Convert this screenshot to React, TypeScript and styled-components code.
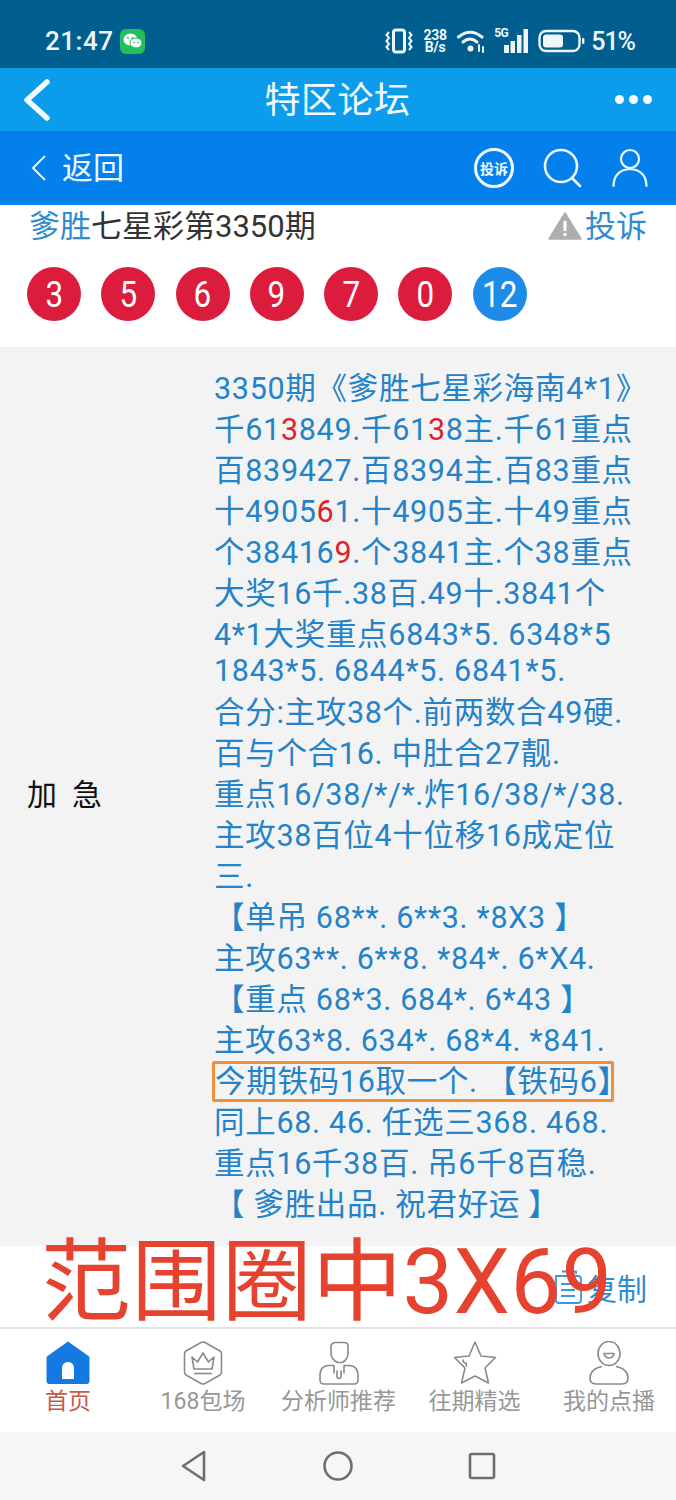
import styled, { createGlobalStyle } from 'styled-components'
import { ReactNode } from 'react'

const GlobalStyle = createGlobalStyle`
  html, body {
    margin: 0;
    padding: 0;
    background: #fff;
    font-family: Roboto, 'Noto Sans CJK SC', sans-serif;
  }
`

const balls = [
  { n: '3', special: false },
  { n: '5', special: false },
  { n: '6', special: false },
  { n: '9', special: false },
  { n: '7', special: false },
  { n: '0', special: false },
  { n: '12', special: true }
]

const R = ({ children }: { children: ReactNode }) => <RedDigit>{children}</RedDigit>

const lines: { text: ReactNode; short?: boolean }[] = [
  { text: '3350期《爹胜七星彩海南4*1》' },
  { text: <>千61<R>3</R>849.千61<R>3</R>8主.千61重点</> },
  { text: '百839427.百8394主.百83重点' },
  { text: <>十4905<R>6</R>1.十4905主.十49重点</> },
  { text: <>个38416<R>9</R>.个3841主.个38重点</> },
  { text: '大奖16千.38百.49十.3841个' },
  { text: '4*1大奖重点6843*5. 6348*5' },
  { text: '1843*5. 6844*5. 6841*5.', short: true },
  { text: '合分:主攻38个.前两数合49硬.' },
  { text: '百与个合16. 中肚合27靓.' },
  { text: '重点16/38/*/*.炸16/38/*/38.' },
  { text: '主攻38百位4十位移16成定位' },
  { text: '三.' },
  { text: '【单吊 68**. 6**3. *8X3 】' },
  { text: '主攻63**. 6**8. *84*. 6*X4.' },
  { text: '【重点 68*3. 684*. 6*43 】' },
  { text: '主攻63*8. 634*. 68*4. *841.' }
]

const linesAfter = [
  '同上68. 46. 任选三368. 468.',
  '重点16千38百. 吊6千8百稳.',
  '【 爹胜出品. 祝君好运 】'
]

const tabs = [
  { label: '首页', active: true, icon: <HomeIcon /> },
  { label: '168包场', active: false, icon: <CrownIcon /> },
  { label: '分析师推荐', active: false, icon: <AnalystIcon /> },
  { label: '往期精选', active: false, icon: <StarIcon /> },
  { label: '我的点播', active: false, icon: <SmileIcon /> }
]

function HomeIcon() {
  return (
    <svg width="44" height="44" viewBox="0 0 44 44">
      <path
        fill="#1479e0"
        fillRule="evenodd"
        d="M22 0.5 L42.5 15 Q43.5 16 43.5 17 V40 Q43.5 43 40.5 43 H3.5 Q0.5 43 0.5 40 V17 Q0.5 16 1.5 15 Z M16 38 H28 V28 Q28 21 22 21 Q16 21 16 28 Z"
      />
    </svg>
  )
}

function CrownIcon() {
  return (
    <svg width="44" height="44" viewBox="0 0 44 44" fill="none" stroke="#8a8a8a" strokeWidth="1.6" strokeLinejoin="round">
      <path d="M20 1.5 Q22 0.5 24 1.5 L39 10 Q40.5 11 40.5 13 V31 Q40.5 33 39 34 L24 42.5 Q22 43.5 20 42.5 L5 34 Q3.5 33 3.5 31 V13 Q3.5 11 5 10 Z" />
      <path d="M11 16 L16.5 21 L22 12 L27.5 21 L33 16 L31 28 H13 Z" />
      <path d="M13 32.5 H31" />
    </svg>
  )
}

function AnalystIcon() {
  return (
    <svg width="44" height="44" viewBox="0 0 44 44" fill="none" stroke="#8a8a8a" strokeWidth="1.6" strokeLinejoin="round" strokeLinecap="round">
      <path d="M18 1.5 H27 Q31 1.5 31 5 V12 Q31 19 25 21.5 H21 Q14 19 14 12 V6 Q14 2 18 1.5 Z" />
      <path d="M17 24.5 H11 Q3 25.5 3 34 V39 Q3 43 7 43 H37 Q41 43 41 39 V34 Q41 25.5 33 24.5 H27 V32 M17 24.5 V32" />
      <path d="M20 30 V35 Q20 37.5 22 37.5 Q24 37.5 24 35 V30" />
    </svg>
  )
}

function StarIcon() {
  return (
    <svg width="44" height="44" viewBox="0 0 44 44" fill="none" stroke="#8a8a8a" strokeWidth="1.6" strokeLinejoin="round" strokeLinecap="round">
      <path d="M22 1 L28 15 L42.5 16.5 L32 27 L35.5 42 L22 35 L8.5 42 L12 27 L1.5 16.5 L16 15 Z" />
      <path d="M10 19 Q10 22 13 22 L13.5 25" />
    </svg>
  )
}

function SmileIcon() {
  return (
    <svg width="44" height="44" viewBox="0 0 44 44" fill="none" stroke="#8a8a8a" strokeWidth="1.6" strokeLinejoin="round">
      <ellipse cx="22" cy="12.5" rx="11" ry="12" />
      <path d="M17 12.5 H27 Q26 17 22 17 Q18 17 17 12.5 Z" />
      <path d="M15 25.5 Q3 28 3 37 Q3 43 9 43 H35 Q41 43 41 37 Q41 28 29 25.5" />
    </svg>
  )
}

const App = () => (
  <Page>
    <GlobalStyle />
    <StatusBar>
      <StatusLeft>
        <Clock>21:47</Clock>
        <WeChatBadge>
          <svg width="19" height="16" viewBox="0 0 19 16">
            <ellipse cx="7.5" cy="6.5" rx="7" ry="6" fill="#fff" />
            <ellipse cx="13" cy="10" rx="6" ry="5" fill="#fff" stroke="#22c05c" strokeWidth="1" />
            <circle cx="5" cy="5" r="1" fill="#22c05c" />
            <circle cx="9.5" cy="5" r="1" fill="#22c05c" />
            <circle cx="11" cy="9.5" r="0.8" fill="#22c05c" />
            <circle cx="15" cy="9.5" r="0.8" fill="#22c05c" />
          </svg>
        </WeChatBadge>
      </StatusLeft>
      <StatusRight>
        <svg width="28" height="26" viewBox="0 0 28 26" fill="none" stroke="#eef6fb" strokeWidth="2">
          <rect x="8.5" y="2" width="11" height="22" rx="2.5" strokeWidth="3" />
          <path d="M4 4 L1.5 7 L4 10 L1.5 13 L4 16 L1.5 19 L4 22" strokeWidth="2" />
          <path d="M24 4 L26.5 7 L24 10 L26.5 13 L24 16 L26.5 19 L24 22" strokeWidth="2" />
        </svg>
        <Speed>
          <span>238</span>
          <span>B/s</span>
        </Speed>
        <svg width="28" height="24" viewBox="0 0 28 24" fill="none" stroke="#eef6fb" strokeWidth="3" strokeLinecap="round">
          <path d="M1.5 8 Q13 -1.5 25 8" />
          <path d="M6 13 Q13 7 20 13" />
          <circle cx="13.5" cy="19.5" r="3" fill="#eef6fb" stroke="none" />
          <path d="M22 16 V22 M26 18 V23" strokeWidth="2" />
        </svg>
        <SignalWrap>
          <FiveG>5G</FiveG>
          <svg width="35" height="26" viewBox="0 0 35 26" fill="#eef6fb">
            <rect x="10" y="17" width="5" height="8" />
            <rect x="16.5" y="13" width="4.5" height="12" />
            <rect x="23" y="7" width="4.5" height="18" />
            <rect x="29.5" y="1" width="4.5" height="24" />
          </svg>
        </SignalWrap>
        <svg width="47" height="24" viewBox="0 0 47 24" fill="none">
          <rect x="1.5" y="2" width="40" height="20" rx="6.5" stroke="#eef6fb" strokeWidth="2.4" />
          <rect x="5" y="5.5" width="20" height="13" rx="3" fill="#eef6fb" />
          <rect x="44" y="9" width="2.4" height="6" rx="1" fill="#eef6fb" />
        </svg>
        <Battery>51%</Battery>
      </StatusRight>
    </StatusBar>

    <TitleBar>
      <svg width="30" height="44" viewBox="0 0 30 44" fill="none" stroke="#f4fbff" strokeWidth="5.5" strokeLinecap="round" strokeLinejoin="round">
        <path d="M25 4 L5 22 L25 40" />
      </svg>
      <TitleText>特区论坛</TitleText>
      <Dots>
        <i />
        <i />
        <i />
      </Dots>
    </TitleBar>

    <NavBar>
      <BackLink>
        <svg width="18" height="30" viewBox="0 0 18 30" fill="none" stroke="#e8f4ff" strokeWidth="2">
          <path d="M15 3 L3 15 L15 27" />
        </svg>
        <BackText>返回</BackText>
      </BackLink>
      <NavIcons>
        <ComplainBadge>投诉</ComplainBadge>
        <svg width="40" height="40" viewBox="0 0 40 40" fill="none" stroke="#f0f8ff" strokeWidth="2.6" strokeLinecap="round">
          <circle cx="18" cy="18" r="16" />
          <path d="M29 30 L37 38" />
        </svg>
        <svg width="36" height="40" viewBox="0 0 36 40" fill="none" stroke="#f0f8ff" strokeWidth="2.2" strokeLinecap="round">
          <circle cx="18" cy="11" r="9" />
          <path d="M1.5 38 Q2 22 18 21 Q34 22 34.5 38" />
        </svg>
      </NavIcons>
    </NavBar>

    <HeadRow>
      <Heading>
        <Author>爹胜</Author>七星彩第3350期
      </Heading>
      <ReportLink>
        <svg width="34" height="28" viewBox="0 0 34 28">
          <path d="M17 1 L33 27 H1 Z" fill="#aeaeae" stroke="#aeaeae" strokeWidth="1.5" strokeLinejoin="round" />
          <rect x="15.5" y="9" width="3" height="10" fill="#fff" />
          <rect x="15.5" y="21" width="3" height="3" fill="#fff" />
        </svg>
        <span>投诉</span>
      </ReportLink>
    </HeadRow>

    <BallRow>
      {balls.map((b, i) => (
        <Ball key={i} $special={b.special}>
          <BallDigit>{b.n}</BallDigit>
        </Ball>
      ))}
    </BallRow>

    <ContentRow>
      <RowLabel>加  急</RowLabel>
      <Body>
        {lines.map((l, i) => (
          <Line key={i} $short={l.short}>
            {l.text}
          </Line>
        ))}
        <Highlight>今期铁码16取一个. 【铁码6】</Highlight>
        {linesAfter.map((l, i) => (
          <Line key={i}>{l}</Line>
        ))}
      </Body>
    </ContentRow>

    <CopyRow>
      <CopyLink>
        <svg width="30" height="34" viewBox="0 0 30 34" fill="none" stroke="#3d97dd" strokeWidth="1.8">
          <path d="M8 1.5 H22 V4 M2 6 H24 Q27 6 27 9 V30 Q27 33 24 33 H5 Q2 33 2 30 Z" />
          <path d="M7 14 H21 M7 20 H21 M7 26 H21" />
        </svg>
        <span>复制</span>
      </CopyLink>
      <Overlay>范围圈中3X69</Overlay>
    </CopyRow>

    <TabBar>
      {tabs.map(t => (
        <Tab key={t.label}>
          {t.icon}
          <TabLabel $active={t.active}>{t.label}</TabLabel>
        </Tab>
      ))}
    </TabBar>

    <SystemBar>
      <svg width="28" height="32" viewBox="0 0 28 32" fill="none" stroke="#6f6f6f" strokeWidth="2.6" strokeLinejoin="round">
        <path d="M24 2 V30 L3 16 Z" />
      </svg>
      <svg width="30" height="30" viewBox="0 0 30 30" fill="none" stroke="#6f6f6f" strokeWidth="2.6">
        <circle cx="15" cy="15" r="13.5" />
      </svg>
      <svg width="28" height="28" viewBox="0 0 28 28" fill="none" stroke="#6f6f6f" strokeWidth="2.6" strokeLinejoin="round">
        <rect x="2" y="2" width="24" height="24" rx="1.5" />
      </svg>
    </SystemBar>
  </Page>
)

export default App

const Page = styled.div`
  width: 676px;
  height: 1500px;
  overflow: hidden;
  display: flex;
  flex-direction: column;
  background: #fff;
`

const StatusBar = styled.div`
  height: 68px;
  box-sizing: border-box;
  padding: 14px 41px 0 45px;
  display: flex;
  align-items: center;
  justify-content: space-between;
  background: #005f8f;
  color: #eef6fb;
`

const StatusLeft = styled.div`
  display: flex;
  align-items: center;
  gap: 7px;
`

const Clock = styled.span`
  font-size: 26px;
  font-weight: 500;
  letter-spacing: 0.5px;
`

const WeChatBadge = styled.span`
  width: 25px;
  height: 25px;
  border-radius: 6px;
  background: #22c05c;
  display: flex;
  align-items: center;
  justify-content: center;
`

const StatusRight = styled.div`
  display: flex;
  align-items: center;
  gap: 9px;
`

const Speed = styled.div`
  width: 26px;
  display: flex;
  flex-direction: column;
  align-items: center;
  font-size: 14px;
  font-weight: 700;
  line-height: 12.5px;
  letter-spacing: -0.2px;
`

const SignalWrap = styled.div`
  position: relative;
  width: 35px;
  height: 26px;
`

const FiveG = styled.span`
  position: absolute;
  left: 0;
  top: -1px;
  font-size: 12px;
  font-weight: 700;
  line-height: 12px;
  letter-spacing: -0.5px;
`

const Battery = styled.span`
  font-size: 25px;
  font-weight: 500;
  letter-spacing: -1px;
  margin-left: -3px;
`

const TitleBar = styled.div`
  height: 63px;
  box-sizing: border-box;
  padding: 0 24px 0 22px;
  display: flex;
  align-items: center;
  justify-content: space-between;
  background: #0c9cec;
`

const TitleText = styled.div`
  font-size: 36px;
  color: #f4fbff;
  letter-spacing: 0.5px;
  margin: 0 0 5px 8px;
`

const Dots = styled.div`
  display: flex;
  gap: 5px;
  i {
    width: 9px;
    height: 9px;
    border-radius: 50%;
    background: #f4fbff;
  }
`

const NavBar = styled.div`
  height: 74px;
  box-sizing: border-box;
  padding: 0 28px 0 30px;
  display: flex;
  align-items: center;
  justify-content: space-between;
  background: #0480ec;
`

const BackLink = styled.div`
  display: flex;
  align-items: center;
  gap: 14px;
  font-size: 31px;
  color: #f0f8ff;
`

const BackText = styled.span`
  margin-bottom: 5px;
`

const NavIcons = styled.div`
  display: flex;
  align-items: center;
  gap: 29px;
`

const ComplainBadge = styled.div`
  width: 40px;
  height: 40px;
  border: 3px solid #f0f8ff;
  border-radius: 50%;
  box-sizing: border-box;
  display: flex;
  align-items: center;
  justify-content: center;
  font-size: 14px;
  font-weight: 700;
  white-space: nowrap;
  color: #f0f8ff;
`

const HeadRow = styled.div`
  height: 42px;
  box-sizing: border-box;
  padding: 0 29px 5px;
  display: flex;
  align-items: center;
  justify-content: space-between;
`

const Heading = styled.div`
  font-size: 31px;
  color: #333;
`

const Author = styled.span`
  color: #2f8bd0;
`

const ReportLink = styled.div`
  display: flex;
  align-items: center;
  gap: 3px;
  font-size: 31px;
  color: #2f8bd0;
  svg {
    margin-top: 5px;
  }
`

const BallRow = styled.div`
  height: 100px;
  box-sizing: border-box;
  padding: 20px 0 0 27px;
  display: flex;
  align-items: flex-start;
  gap: 20.3px;
`

const Ball = styled.div<{ $special: boolean }>`
  width: 54px;
  height: 54px;
  border-radius: 50%;
  display: flex;
  align-items: center;
  justify-content: center;
  font-size: 37px;
  font-weight: 400;
  color: #fff;
  background: ${({ $special }) => ($special ? '#1c8ce8' : '#db1c3c')};
`

const BallDigit = styled.span`
  display: inline-block;
  transform: scaleX(0.85);
`

const ContentRow = styled.div`
  height: 899px;
  box-sizing: border-box;
  display: flex;
  align-items: center;
  background: #f3f3f3;
`

const RowLabel = styled.div`
  width: 214px;
  box-sizing: border-box;
  padding-left: 27px;
  margin-bottom: 9px;
  font-size: 30px;
  color: #111;
  white-space: pre;
`

const Body = styled.div`
  display: flex;
  flex-direction: column;
  font-size: 30.5px;
  letter-spacing: 0.7px;
  line-height: 41px;
  color: #2482c8;
  white-space: nowrap;
`

const Line = styled.div<{ $short?: boolean }>`
  height: ${({ $short }) => ($short ? '37px' : '41px')};
  line-height: ${({ $short }) => ($short ? '31px' : '41px')};
`

const RedDigit = styled.span`
  color: #e0202c;
`

const Highlight = styled.div`
  height: 41px;
  width: 402px;
  box-sizing: border-box;
  margin-left: -2px;
  border: 3px solid #ee8f3a;
  border-radius: 2px;
  line-height: 35px;
`

const CopyRow = styled.div`
  position: relative;
  height: 81px;
  box-sizing: border-box;
  padding: 0 29px 0 0;
  display: flex;
  align-items: center;
  justify-content: flex-end;
`

const CopyLink = styled.div`
  display: flex;
  align-items: center;
  gap: 3px;
  font-size: 30px;
  color: #2f8bd0;
  svg {
    margin-left: -2px;
  }
`

const Overlay = styled.div`
  position: absolute;
  left: 41px;
  top: -13px;
  font-size: 90px;
  letter-spacing: 0.4px;
  line-height: 100px;
  color: #e5432f;
  white-space: nowrap;
`

const TabBar = styled.div`
  height: 105px;
  box-sizing: border-box;
  border-top: 2px solid #e2e2e2;
  padding-top: 12px;
  display: grid;
  grid-template-columns: 136px 134px 137px 135px 134px;
  background: #fff;
`

const Tab = styled.div`
  display: flex;
  flex-direction: column;
  align-items: center;
`

const TabLabel = styled.div<{ $active: boolean }>`
  margin-top: 2px;
  font-size: 23px;
  line-height: 30px;
  white-space: nowrap;
  color: ${({ $active }) => ($active ? '#c9584c' : '#979797')};
`

const SystemBar = styled.div`
  height: 68px;
  display: flex;
  align-items: center;
  justify-content: center;
  gap: 115px;
  background: #f6f6f6;
`
